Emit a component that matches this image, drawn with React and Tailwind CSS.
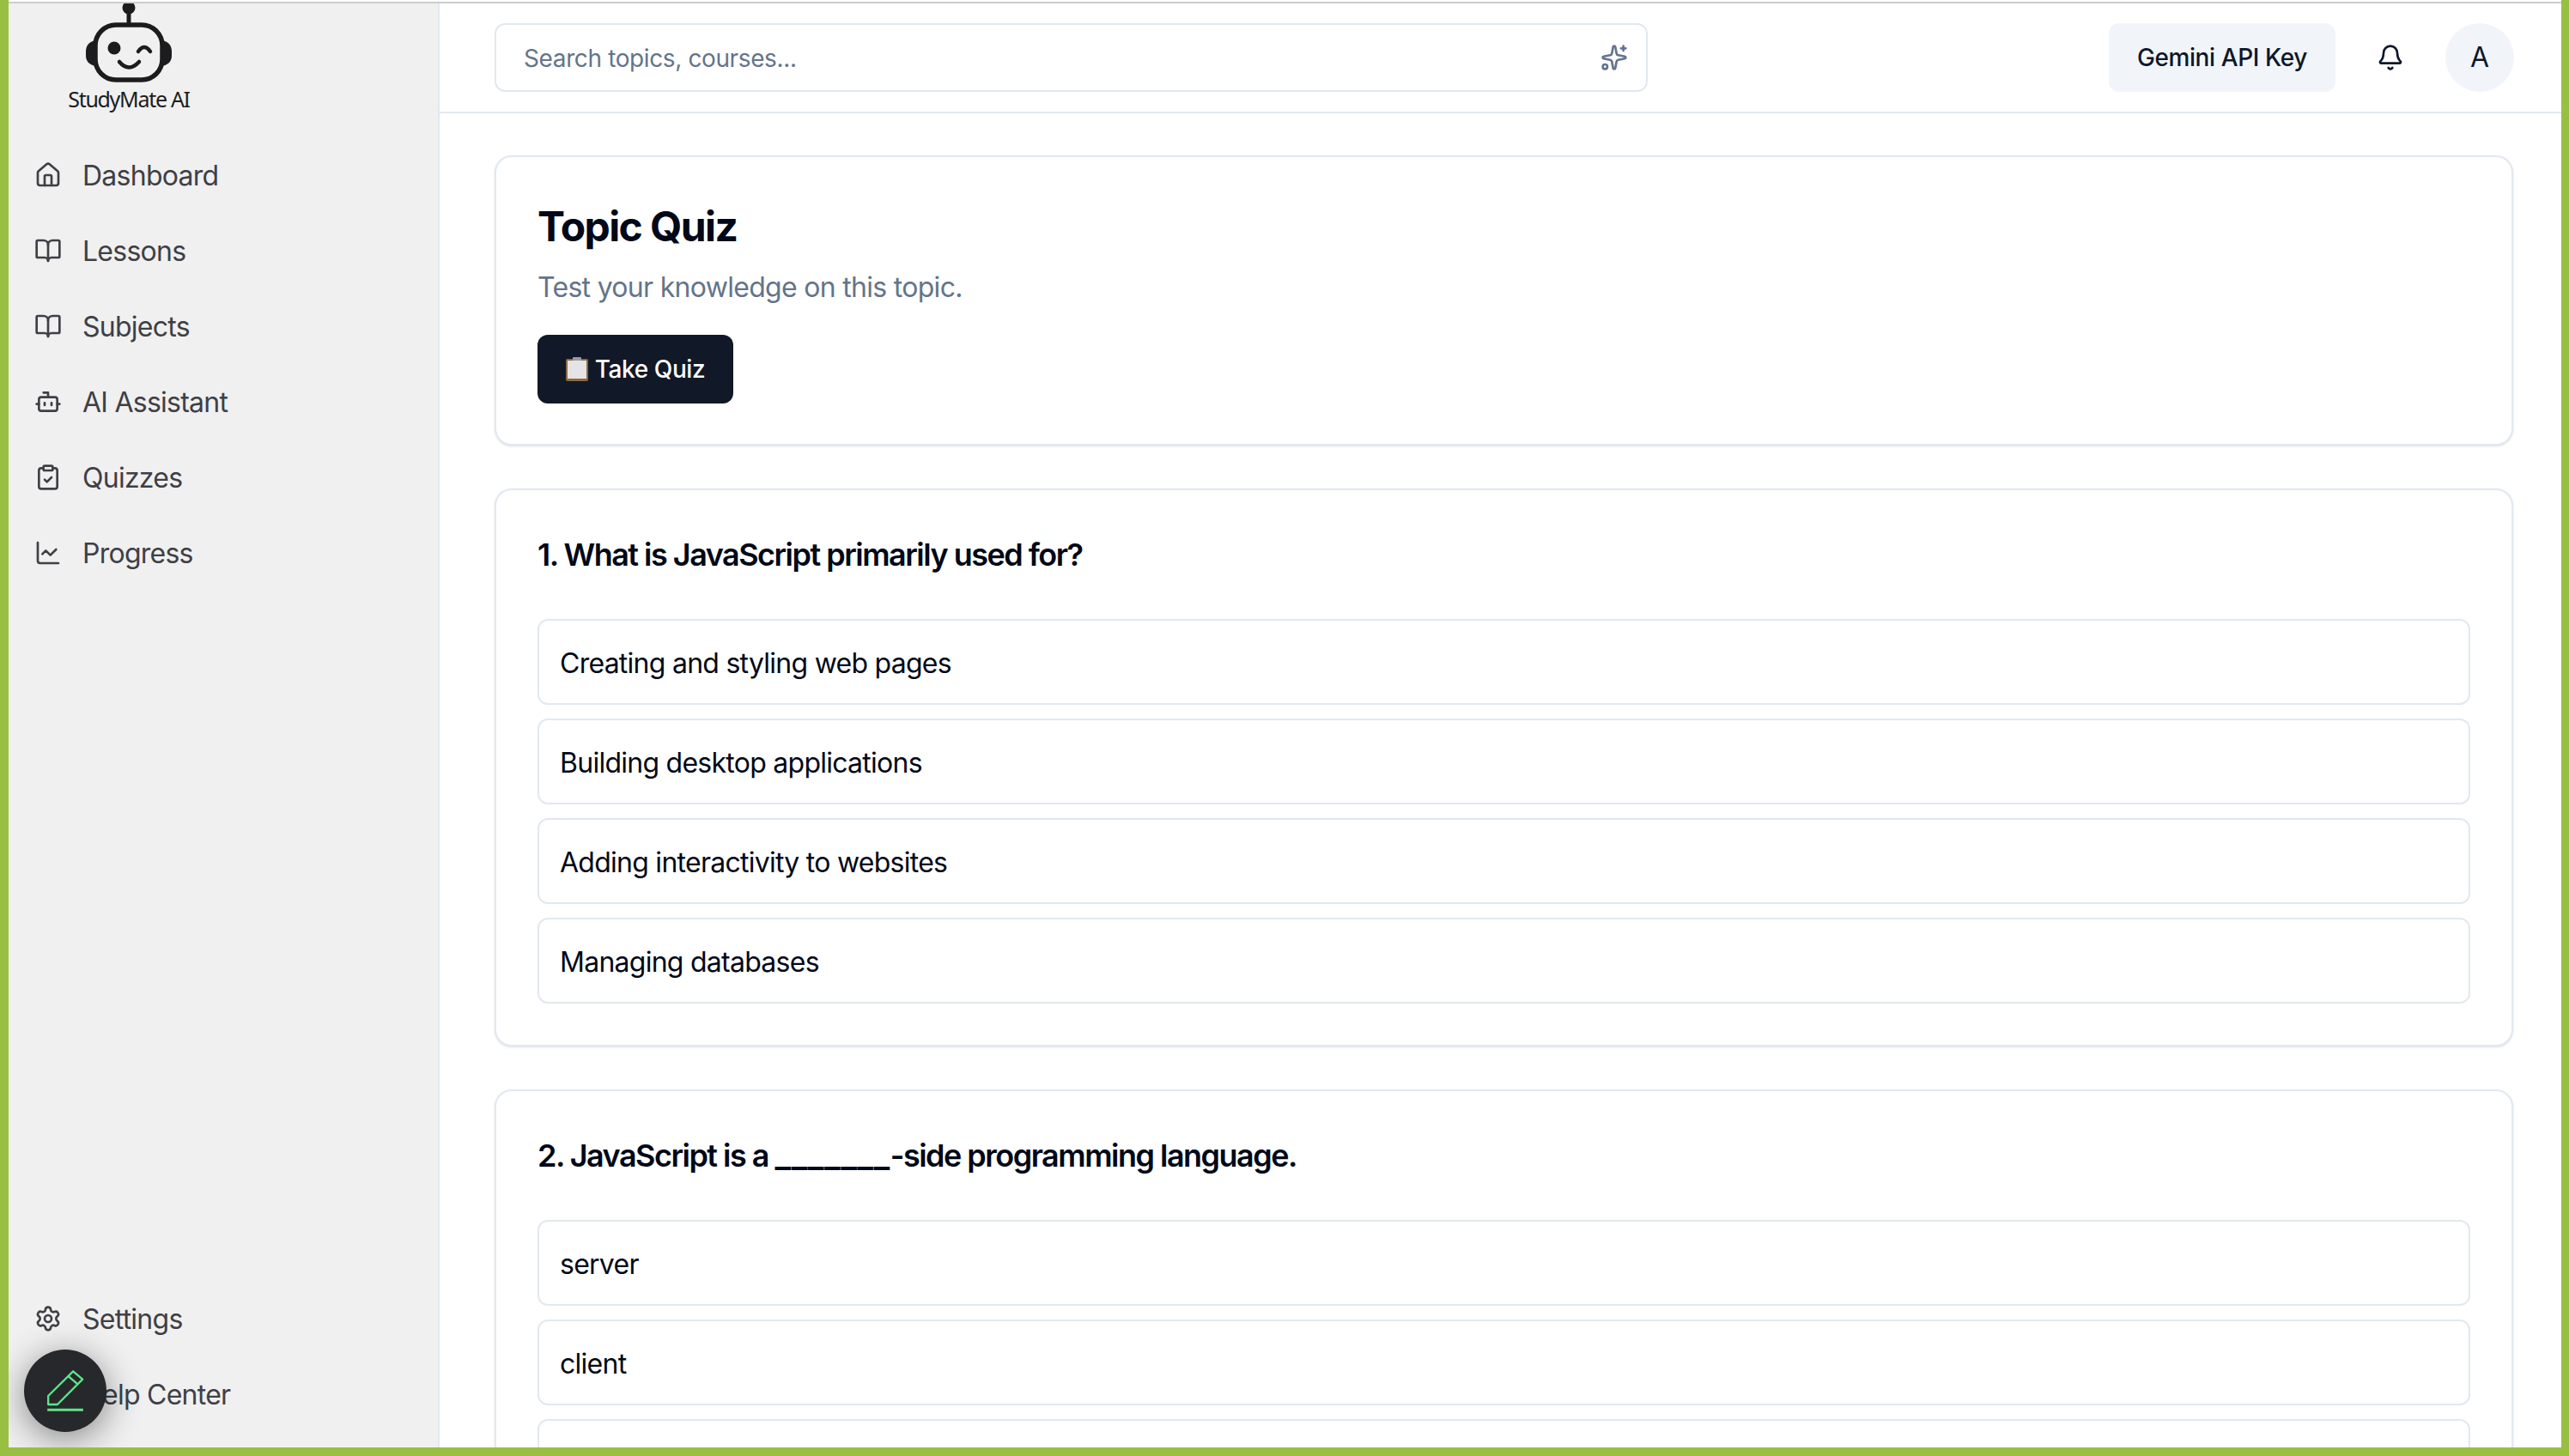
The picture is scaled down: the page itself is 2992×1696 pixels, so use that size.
import { Bell, Bot, BookOpen, ChartLine, CircleHelp, ClipboardCheck, House, Settings, Sparkles } from "lucide-react";

const mainNav = [
  { label: "Dashboard", icon: House },
  { label: "Lessons", icon: BookOpen },
  { label: "Subjects", icon: BookOpen },
  { label: "AI Assistant", icon: Bot },
  { label: "Quizzes", icon: ClipboardCheck },
  { label: "Progress", icon: ChartLine },
];

const bottomNav = [
  { label: "Settings", icon: Settings },
  { label: "Help Center", icon: CircleHelp },
];

const questions = [
  {
    text: "1. What is JavaScript primarily used for?",
    options: [
      "Creating and styling web pages",
      "Building desktop applications",
      "Adding interactivity to websites",
      "Managing databases",
    ],
  },
  {
    text: (
      <>
        2. JavaScript is a <span className="text-[40px] leading-none tracking-[0.4px]">_______</span>-side programming language.
      </>
    ),
    options: ["server", "client", ""],
  },
];

function NavItem({ label, icon: Icon }) {
  return (
    <div className="flex h-[88px] items-center gap-[24px] pl-[30px] text-[32px] tracking-[-0.75px] text-[#3f3f46]">
      <Icon size={32} strokeWidth={2} />
      <span className="pt-[2px]">{label}</span>
    </div>
  );
}

function RobotLogo() {
  return (
    <svg width="100" height="92" viewBox="99 4 100 92" className="block">
      <circle cx="149" cy="9" r="7.5" fill="#1c1c1e" />
      <rect x="146.5" y="9" width="5" height="19" fill="#1c1c1e" />
      <path d="M111 47 C103 48 99 53 99 60 L99 65 C99 71 103 76 111 77 Z" fill="#1c1c1e" />
      <path d="M187 47 C195 48 199 53 199 60 L199 65 C199 71 195 76 187 77 Z" fill="#1c1c1e" />
      <rect x="110" y="29" width="78" height="64" rx="24" fill="none" stroke="#1c1c1e" stroke-width="5.5" />
      <circle cx="132" cy="56" r="7.5" fill="#1c1c1e" />
      <path d="M160 60 Q167 50 174 60" fill="none" stroke="#1c1c1e" stroke-width="4.5" stroke-linecap="round" />
      <path d="M138 72 Q149 85 161 72" fill="none" stroke="#1c1c1e" stroke-width="4.5" stroke-linecap="round" />
    </svg>
  );
}

function ClipboardEmoji() {
  return (
    <svg width="26" height="28" viewBox="0 0 26 28" className="block shrink-0">
      <rect x="0" y="2" width="26" height="26" rx="2" fill="#8a6a45" />
      <rect x="2" y="4" width="22" height="21" fill="#e4e4e4" />
      <rect x="8" y="0" width="10" height="4" rx="1" fill="#9a9aa0" />
    </svg>
  );
}

function QuestionCard({ text, options }) {
  return (
    <section className="shrink-0 rounded-[20px] border-2 border-[#e2e8f0] bg-white p-[48px] shadow-sm">
      <h3 className="mb-[48px] text-[36px] leading-[54px] font-semibold tracking-[-1.52px] text-[#020817]">{text}</h3>
      <div className="flex flex-col gap-[16px]">
        {options.map((option, index) => (
          <div
            key={index}
            className="flex h-[100px] items-center rounded-[12px] border-2 border-[#e2e8f0] px-[24px] pt-[3px] text-[32px] tracking-[-0.74px] text-[#020817]"
          >
            {option}
          </div>
        ))}
      </div>
    </section>
  );
}

export default function App() {
  return (
    <div
      className="relative flex h-[1696px] w-[2992px] flex-col overflow-hidden border-r-[9px] border-b-[10px] border-l-[10px] border-[#99bf42] bg-white"
      style={{ fontFamily: "Inter, sans-serif" }}
    >
      <div className="mt-[2px] h-[2px] shrink-0 bg-[#cccccc]" />
      <div className="flex min-h-0 flex-1">
        <aside className="flex w-[502px] shrink-0 flex-col justify-between border-r-2 border-[#e2e8f0] bg-[#f0f0f0] pb-[18px]">
          <div>
            <div className="flex h-[156px] w-[280px] flex-col items-center">
              <RobotLogo />
              <div className="mt-[4px] text-[25px] leading-[30px] tracking-[-1.3px] text-[#1c1c1e]" style={{ fontFamily: "'Noto Sans', sans-serif" }}>
                StudyMate AI
              </div>
            </div>
            {mainNav.map((item) => (
              <NavItem key={item.label} {...item} />
            ))}
          </div>
          <div>
            {bottomNav.map((item) => (
              <NavItem key={item.label} {...item} />
            ))}
          </div>
        </aside>

        <div className="flex min-w-0 flex-1 flex-col">
          <header className="flex h-[128px] shrink-0 items-center justify-between border-b-2 border-[#e2e8f0] pr-[55px] pl-[64px]">
            <div className="flex h-[80px] w-[1343px] items-center justify-between rounded-[12px] border-2 border-[#e2e8f0] pr-[21px] pl-[32px] text-[28px] tracking-[-0.38px] text-[#64748b]">
              <span className="pt-[1px]">Search topics, courses...</span>
              <Sparkles size={32} strokeWidth={2} />
            </div>
            <div className="flex items-center gap-[24px]">
              <button className="flex h-[80px] w-[264px] items-center justify-center rounded-[12px] bg-[#f1f5f9] text-[28px] font-medium tracking-[-0.4px] text-[#0f172a]">
                Gemini API Key
              </button>
              <button className="flex size-[80px] items-center justify-center text-[#0f172a]">
                <Bell size={32} strokeWidth={2} />
              </button>
              <div className="flex size-[80px] items-center justify-center rounded-full bg-[#f1f5f9] text-[32px] text-[#0f172a]">A</div>
            </div>
          </header>

          <main className="flex min-h-0 flex-1 flex-col gap-[50px] overflow-hidden pt-[49px] pr-[56px] pl-[64px]">
            <section className="h-[338px] shrink-0 rounded-[20px] border-2 border-[#e2e8f0] bg-white p-[48px] shadow-sm">
              <h2 className="text-[48px] leading-[66px] font-bold tracking-[-1.6px] text-[#020817]">Topic Quiz</h2>
              <p className="mt-[14px] text-[32px] leading-[48px] tracking-[-0.7px] text-[#64748b]">Test your knowledge on this topic.</p>
              <button className="mt-[31px] flex h-[80px] w-[228px] items-center justify-center gap-[8px] rounded-[12px] bg-[#111827] text-[28px] font-medium tracking-[-0.4px] text-white">
                <ClipboardEmoji />
                Take Quiz
              </button>
            </section>
            {questions.map((question, index) => (
              <QuestionCard key={index} {...question} />
            ))}
          </main>
        </div>
      </div>

      <div className="absolute bottom-[18px] left-[18px] flex size-[96px] items-center justify-center rounded-full bg-[#27282b] shadow-[0_8px_40px_rgba(0,0,0,0.45)]">
        <svg width="46" height="50" viewBox="160 345 135 150" fill="none" stroke="#5fe38c" stroke-width="7" stroke-linejoin="round">
          <path d="M168 468 L168 438 L255 352 L288 380 L200 468 Z" />
          <path d="M238 369 L271 397" />
          <path d="M165 487 L290 487" stroke-width="9" />
        </svg>
      </div>
    </div>
  );
}
